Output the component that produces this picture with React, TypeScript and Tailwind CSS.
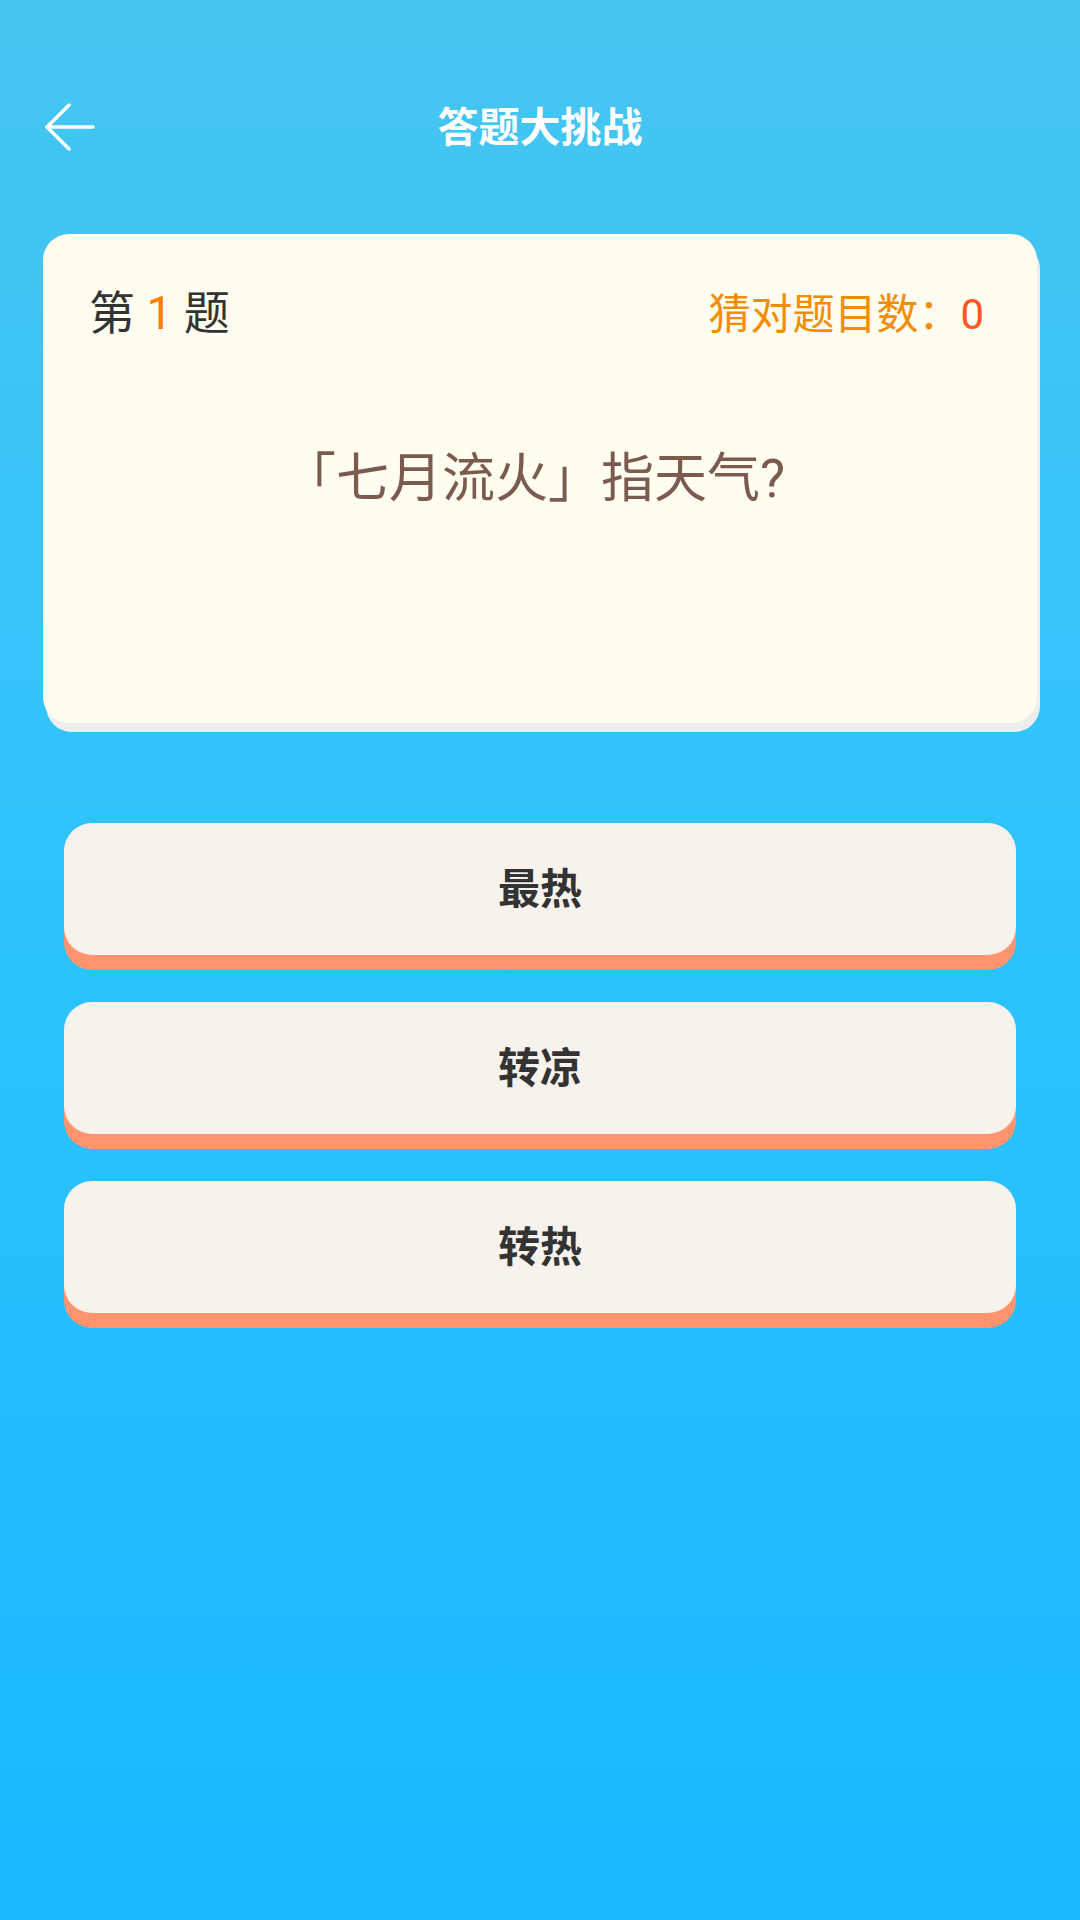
import React from 'react';

const options = ['最热', '转凉', '转热'];

function BackArrow() {
  return (
    <svg width="50" height="50" viewBox="0 0 50 50" fill="none">
      <path
        d="M48 24H3M24 2L2 24L24 46"
        stroke="#ffffff"
        strokeWidth="3.5"
        strokeLinecap="round"
        strokeLinejoin="round"
      />
    </svg>
  );
}

export default function App() {
  return (
    <div
      className="w-[1080px] h-[1920px] bg-gradient-to-b from-[#46c5f0] via-[#2cc2fd] to-[#17b8ff] overflow-hidden"
      style={{ fontFamily: 'Roboto, "Noto Sans CJK SC", sans-serif' }}
    >
      {/* Header */}
      <div className="mt-[80px] h-[96px] grid grid-cols-[1fr_auto_1fr] items-center">
        <div className="pl-[45px] flex items-center">
          <BackArrow />
        </div>
        <h1 className="text-[41px] font-bold text-white leading-none">答题大挑战</h1>
        <div />
      </div>

      {/* Question card */}
      <div className="mt-[58px] mx-[43px] h-[489px] rounded-[26px] bg-[#fffcf0] shadow-[3px_9px_0_0_#eeeeee] flex flex-col">
        <div className="pt-[47px] pl-[46px] pr-[53px] flex items-end justify-between">
          <div className="text-[46px] leading-[64px] text-[#333333]">
            第 <span className="text-[#ff7a00]">1</span> 题
          </div>
          <div className="text-[42px] leading-[58px] text-[#f28c00] pb-[1px]">
            猜对题目数：<span className="text-[#ff5722]">0</span>
          </div>
        </div>
        <div className="mt-[97px] text-center text-[53px] leading-[74px] text-[#7b5b4e] pr-[12px]">
          「七月流火」指天气?
        </div>
      </div>

      {/* Options */}
      <div className="mt-[100px] mx-[64px] flex flex-col gap-[47px]">
        {options.map((opt) => (
          <button
            key={opt}
            className="h-[132px] w-full rounded-[28px] bg-[#f7f2ec] shadow-[0_15px_0_0_#ff946f] flex items-center justify-center text-[42px] font-bold text-[#333333]"
          >
            {opt}
          </button>
        ))}
      </div>
    </div>
  );
}
